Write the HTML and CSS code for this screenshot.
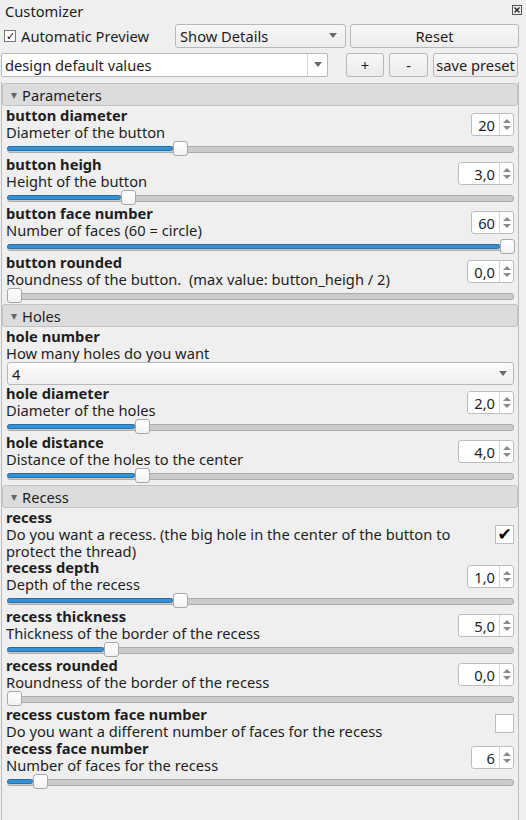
FILE: index.html
```html
<!DOCTYPE html>
<html>
<head>
<meta charset="utf-8">
<link rel="stylesheet" href="styles.css">
</head>
<body>
<div class="dock">
  <div class="titlebar">
    <span class="title">Customizer</span>
    <span class="close"><svg width="10" height="10" viewBox="0 0 10 10"><rect x="0.5" y="0.5" width="9" height="9" fill="none" stroke="#555"/><path d="M2.5 2.5L7.5 7.5M7.5 2.5L2.5 7.5" stroke="#222" stroke-width="1.4"/></svg></span>
  </div>

  <div class="toolbar">
    <label class="auto"><span class="tick">✓</span>Automatic Preview</label>
    <div class="combo details"><span>Show Details</span><span class="arrow"></span></div>
    <div class="btn reset">Reset</div>
  </div>

  <div class="toolbar presets">
    <div class="preset"><span>design default values</span><span class="drop"><span class="arrow"></span></span></div>
    <div class="btn plus">+</div>
    <div class="btn minus">-</div>
    <div class="btn save">save preset</div>
  </div>

  <div class="scroll">
    <div class="group">▾ <span>Parameters</span></div>

    <div class="item">
      <div class="text"><div class="name">button diameter</div><div class="desc">Diameter of the button</div></div>
      <div class="spin w43"><span class="val">20</span><span class="arrows"></span></div>
      <div class="slider"><div class="fill" style="width:33.6%"></div><div class="handle" style="left:33.6%"></div></div>
    </div>

    <div class="item">
      <div class="text"><div class="name">button heigh</div><div class="desc">Height of the button</div></div>
      <div class="spin w56"><span class="val">3,0</span><span class="arrows"></span></div>
      <div class="slider"><div class="fill" style="width:23.1%"></div><div class="handle" style="left:23.1%"></div></div>
    </div>

    <div class="item">
      <div class="text"><div class="name">button face number</div><div class="desc">Number of faces (60 = circle)</div></div>
      <div class="spin w43"><span class="val">60</span><span class="arrows"></span></div>
      <div class="slider"><div class="fill" style="width:100%"></div><div class="handle" style="left:100%"></div></div>
    </div>

    <div class="item">
      <div class="text"><div class="name">button rounded</div><div class="desc">Roundness of the button.&nbsp; (max value: button_heigh / 2)</div></div>
      <div class="spin w47"><span class="val">0,0</span><span class="arrows"></span></div>
      <div class="slider"><div class="fill" style="width:0%"></div><div class="handle" style="left:0%"></div></div>
    </div>

    <div class="group">▾ <span>Holes</span></div>

    <div class="item">
      <div class="text"><div class="name">hole number</div><div class="desc">How many holes do you want</div></div>
      <div class="choice"><span>4</span><span class="arrow"></span></div>
    </div>

    <div class="item">
      <div class="text"><div class="name">hole diameter</div><div class="desc">Diameter of the holes</div></div>
      <div class="spin w47"><span class="val">2,0</span><span class="arrows"></span></div>
      <div class="slider"><div class="fill" style="width:25.9%"></div><div class="handle" style="left:25.9%"></div></div>
    </div>

    <div class="item">
      <div class="text"><div class="name">hole distance</div><div class="desc">Distance of the holes to the center</div></div>
      <div class="spin w56"><span class="val">4,0</span><span class="arrows"></span></div>
      <div class="slider"><div class="fill" style="width:25.9%"></div><div class="handle" style="left:25.9%"></div></div>
    </div>

    <div class="group recess-group">▾ <span>Recess</span></div>

    <div class="item">
      <div class="text"><div class="name">recess</div><div class="desc two">Do you want a recess. (the big hole in the center of the button to protect the thread)</div></div>
      <div class="check on">✔</div>
    </div>

    <div class="item">
      <div class="text"><div class="name">recess depth</div><div class="desc">Depth of the recess</div></div>
      <div class="spin w47"><span class="val">1,0</span><span class="arrows"></span></div>
      <div class="slider"><div class="fill" style="width:33.6%"></div><div class="handle" style="left:33.6%"></div></div>
    </div>

    <div class="item">
      <div class="text"><div class="name">recess thickness</div><div class="desc">Thickness of the border of the recess</div></div>
      <div class="spin w56"><span class="val">5,0</span><span class="arrows"></span></div>
      <div class="slider"><div class="fill" style="width:19.7%"></div><div class="handle" style="left:19.7%"></div></div>
    </div>

    <div class="item">
      <div class="text"><div class="name">recess rounded</div><div class="desc">Roundness of the border of the recess</div></div>
      <div class="spin w56"><span class="val">0,0</span><span class="arrows"></span></div>
      <div class="slider"><div class="fill" style="width:0%"></div><div class="handle" style="left:0%"></div></div>
    </div>

    <div class="item">
      <div class="text"><div class="name">recess custom face number</div><div class="desc">Do you want a different number of faces for the recess</div></div>
      <div class="check"></div>
    </div>

    <div class="item">
      <div class="text"><div class="name">recess face number</div><div class="desc">Number of faces for the recess</div></div>
      <div class="spin w43"><span class="val">6</span><span class="arrows"></span></div>
      <div class="slider"><div class="fill" style="width:5.3%"></div><div class="handle" style="left:5.3%"></div></div>
    </div>
  </div>
</div>
</body>
</html>
```

FILE: styles.css
```css
* { box-sizing: border-box; }

html, body {
  margin: 0;
  height: 100%;
  background: #efefef;
}

body {
  font-family: "Noto Sans", "Open Sans", sans-serif;
  font-size: 14.7px;
  color: #1e1e1e;
  overflow: hidden;
}

.dock {
  display: flex;
  flex-direction: column;
  height: 820px;
  width: 526px;
}

/* title bar */
.titlebar {
  height: 21px;
  display: flex;
  align-items: center;
  justify-content: space-between;
  padding: 0 4px 0 5px;
}
.title { line-height: 20px; }
.close { display: flex; height: 10px; margin-top: -1px; }

/* toolbars */
.toolbar {
  display: flex;
  align-items: center;
  height: 29px;
  padding: 0 7px 0 1px;
}

.auto {
  display: flex;
  align-items: center;
  width: 174px;
  padding-left: 3px;
}
.tick {
  width: 12px;
  height: 12px;
  border: 1px solid #7a7a7a;
  background: #fff;
  font-size: 11px;
  line-height: 10px;
  text-align: center;
  margin-right: 5px;
  color: #111;
}

.btn, .combo {
  height: 24px;
  border: 1px solid #b8b8b8;
  border-radius: 3px;
  background: linear-gradient(#f7f7f7, #ececec);
  display: flex;
  align-items: center;
}
.btn { justify-content: center; }

.combo {
  padding: 0 8px 0 4px;
  justify-content: space-between;
}
.details { width: 171px; }
.reset { width: 169px; margin-left: 4px; }

.arrow {
  width: 0;
  height: 0;
  border-left: 4px solid transparent;
  border-right: 4px solid transparent;
  border-top: 5px solid #6a6a6a;
}

.preset {
  width: 327px;
  height: 24px;
  background: #fff;
  border: 1px solid #b8b8b8;
  border-radius: 2px;
  display: flex;
  align-items: center;
  justify-content: space-between;
  padding-left: 3px;
}
.drop {
  width: 20px;
  height: 100%;
  border-left: 1px solid #d4d4d4;
  display: flex;
  align-items: center;
  justify-content: center;
}
.plus { width: 38px; margin-left: 18px; }
.minus { width: 39px; margin-left: 5px; }
.save { width: 85px; margin-left: 5px; }

/* scroll area */
.scroll {
  flex: 1;
  margin: 3px 7px 0 1px;
  border-left: 1px solid #bdbdbd;
  border-right: 1px solid #bdbdbd;
  display: flex;
  flex-direction: column;
}

.group {
  height: 23px;
  margin: 1px 0 1px 0;
  background: #dcdcdc;
  border: 1px solid #c2c2c2;
  border-radius: 3px;
  display: flex;
  align-items: center;
  padding-left: 8px;
  color: #666;
  font-size: 12px;
}
.recess-group { margin-top: 2px; }
.group span {
  font-size: 14.7px;
  color: #1e1e1e;
  margin-left: 5px;
}

.item {
  display: grid;
  grid-template-columns: 1fr auto;
  align-items: center;
  padding: 0 4px 0 4px;
}
.text { line-height: 17px; }
.name { font-weight: bold; }
.desc { padding-right: 20px; }
.desc.two { line-height: 16.5px; }

/* spin box */
.spin {
  height: 23px;
  background: #fff;
  border: 1px solid #bdbdbd;
  border-radius: 3px;
  display: flex;
  align-items: center;
  margin-top: 1px;
}
.w43 { width: 43px; }
.w47 { width: 47px; }
.w56 { width: 56px; }
.val {
  flex: 1;
  text-align: right;
  padding-right: 4px;
}
.arrows {
  width: 14px;
  height: 100%;
  border-left: 1px solid #d6d6d6;
  position: relative;
}
.arrows::before, .arrows::after {
  content: "";
  position: absolute;
  left: 3px;
  border-left: 4px solid transparent;
  border-right: 4px solid transparent;
}
.arrows::before { top: 5px; border-bottom: 4px solid #8a8a8a; }
.arrows::after { bottom: 5px; border-top: 4px solid #8a8a8a; }

/* slider */
.slider {
  grid-column: 1 / 3;
  position: relative;
  height: 15px;
  margin: 0 14px 0 1px;
}
.slider::before {
  content: "";
  position: absolute;
  left: 0;
  right: -14px;
  top: 5px;
  height: 5px;
  background: #cbcbcb;
  border: 1px solid #ababab;
  border-radius: 3px;
}
.fill {
  position: absolute;
  left: 0;
  top: 5px;
  height: 5px;
  background: #3591d4;
  border: 1px solid #2a6ea6;
  border-radius: 3px;
}
.handle {
  position: absolute;
  top: 0;
  width: 15px;
  height: 15px;
  background: linear-gradient(#ffffff, #f2f2f2);
  border: 1px solid #a8a8a8;
  border-radius: 3px;
}

/* combo inside scroll */
.choice {
  grid-column: 1 / 3;
  height: 23px;
  margin: 0 0 0 1px;
  background: linear-gradient(#fbfbfb, #f1f1f1);
  border: 1px solid #b8b8b8;
  border-radius: 3px;
  display: flex;
  align-items: center;
  justify-content: space-between;
  padding: 0 6px 0 4px;
}

/* check box */
.check {
  width: 19px;
  height: 19px;
  background: #fff;
  border: 1px solid #bdbdbd;
  font-size: 17px;
  line-height: 17px;
  text-align: center;
  color: #000;
  font-family: "DejaVu Sans", sans-serif;
}
.check.on { font-weight: bold; }
```
